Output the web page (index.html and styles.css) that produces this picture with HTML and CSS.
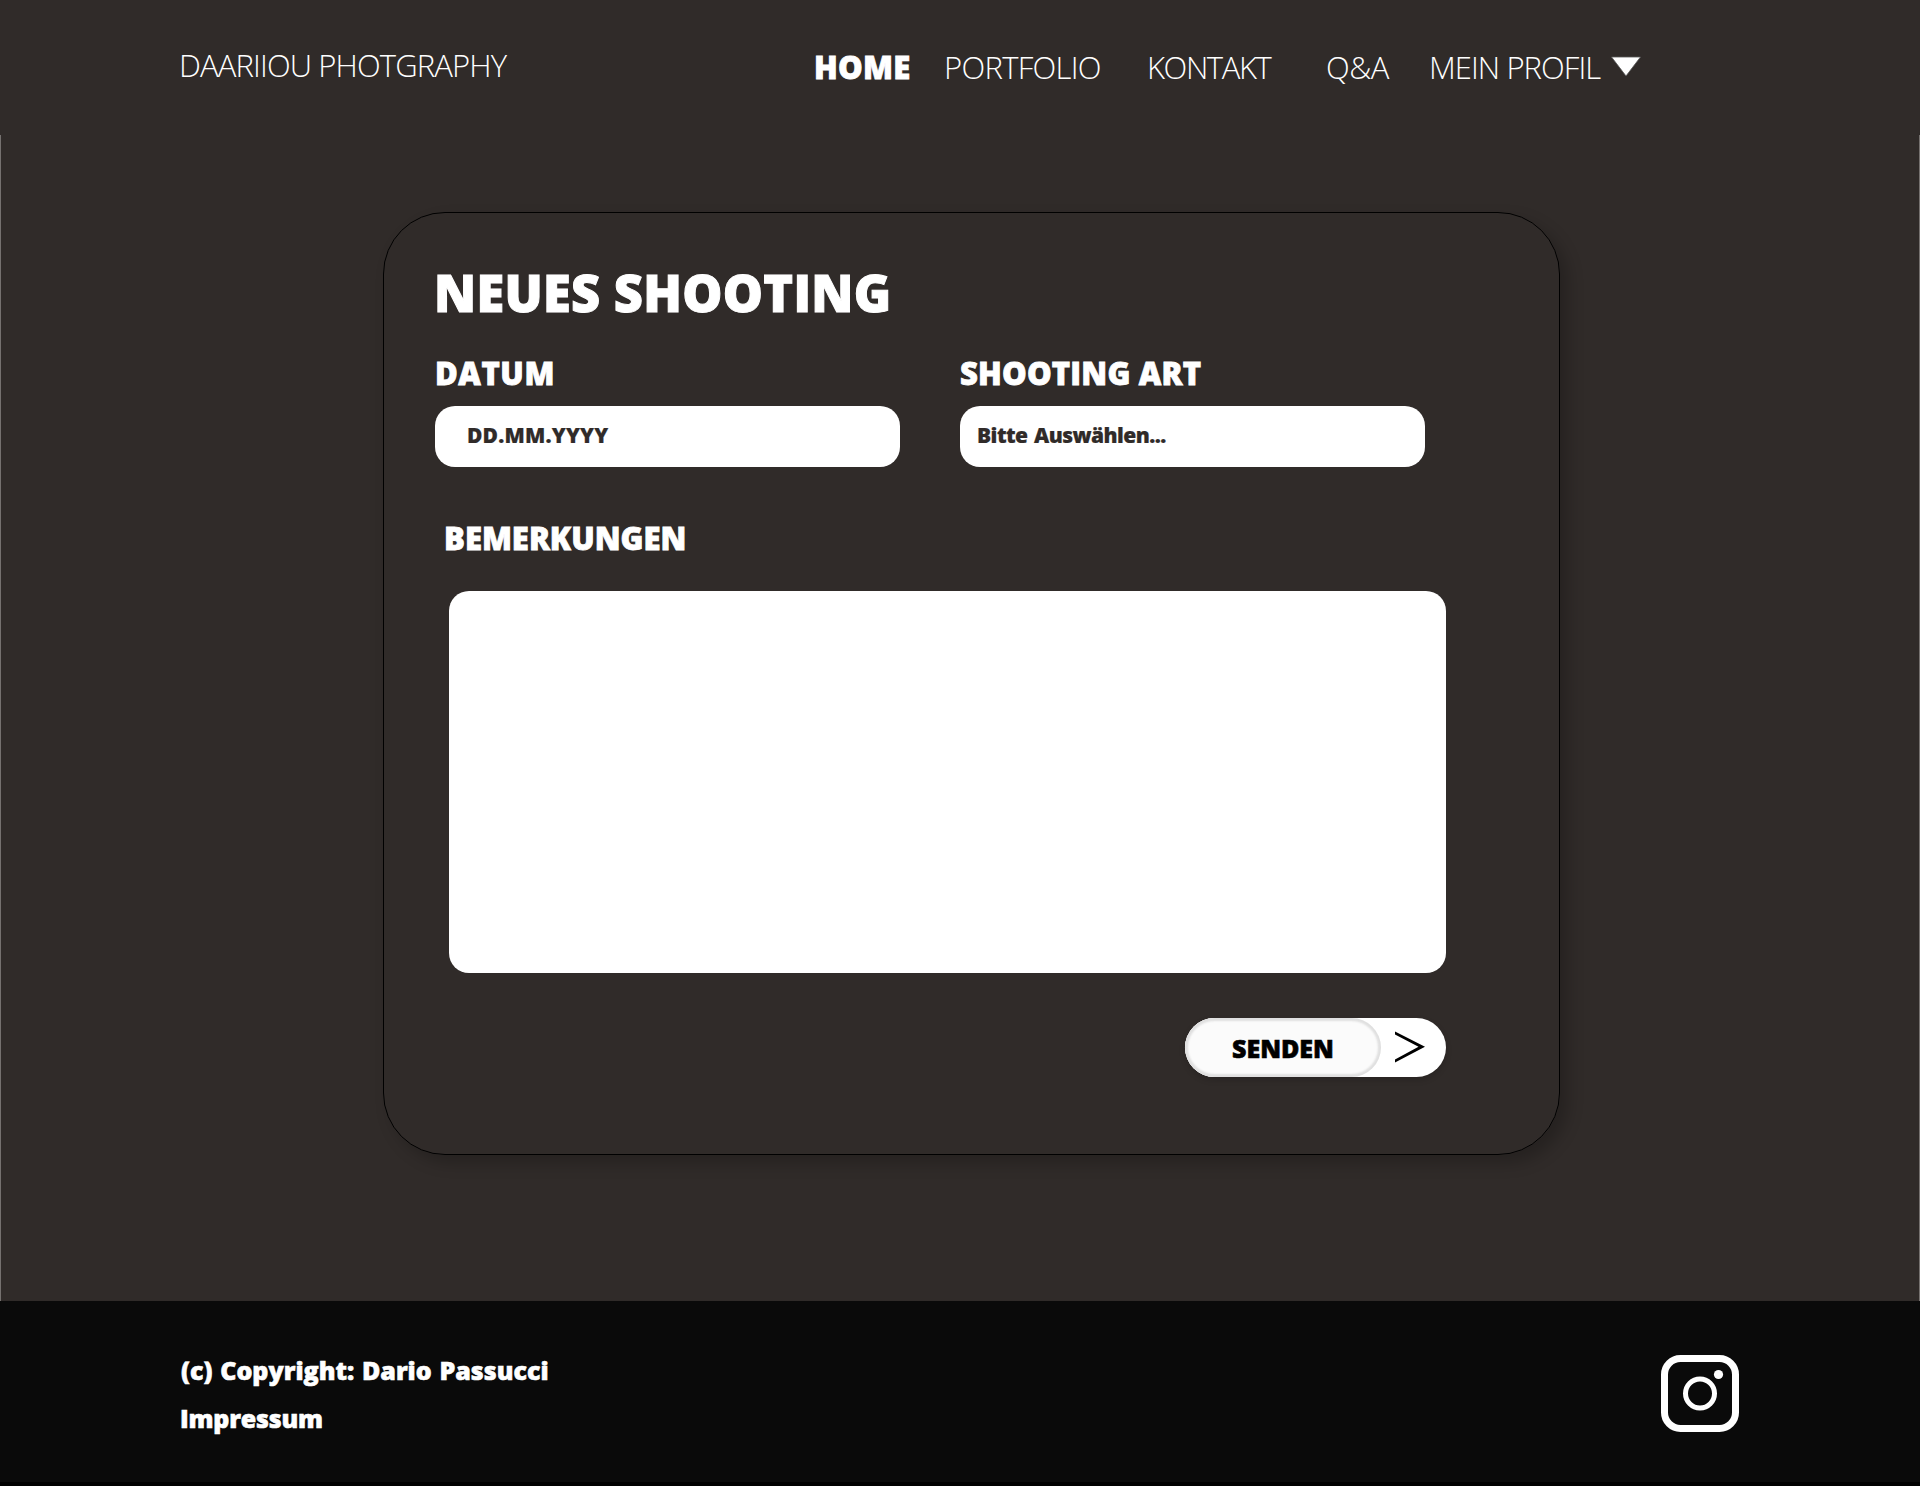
FILE: index.html
```html
<!DOCTYPE html>
<html lang="de">
<head>
<meta charset="utf-8">
<title>Neues Shooting</title>
<link rel="stylesheet" href="styles.css">
</head>
<body>
<header class="header">
  <div class="logo">DAARIIOU PHOTGRAPHY</div>
  <nav class="nav">
    <a class="nav-item active">HOME</a>
    <a class="nav-item portfolio">PORTFOLIO</a>
    <a class="nav-item kontakt">KONTAKT</a>
    <a class="nav-item">Q&amp;A</a>
    <a class="nav-item profil">MEIN PROFIL</a>
    <svg class="caret" width="30" height="21" viewBox="0 0 30 21"><path d="M.5 1H29.500L15 20Z" fill="#fff" stroke="#555" stroke-width=".8"/></svg>
  </nav>
</header>
<main class="main">
  <form class="card">
    <h1 class="title">NEUES SHOOTING</h1>
    <div class="fields">
      <div class="field">
        <label class="label datum">DATUM</label>
        <div class="input date">DD.MM.YYYY</div>
      </div>
      <div class="field">
        <label class="label art">SHOOTING ART</label>
        <div class="input select">Bitte Auswählen...</div>
      </div>
    </div>
    <div class="remarks">
      <label class="label">BEMERKUNGEN</label>
      <div class="textarea"></div>
      <div class="send">
        <span class="send-label">SENDEN</span>
        <svg class="chevron" width="32" height="34" viewBox="0 0 32 34"><path d="M1 1.500V4.500L24.500 16.700L1 29.500V32.500L31 16.700Z" fill="#000"/></svg>
      </div>
    </div>
  </form>
</main>
<footer class="footer">
  <div class="legal">
    <div class="copyright">(c) Copyright: Dario Passucci</div>
    <div class="impressum">Impressum</div>
  </div>
  <svg class="instagram" width="78" height="78" viewBox="0 0 78 78" fill="none" stroke="#fff">
    <rect x="3.500" y="3.500" width="71" height="70" rx="16" stroke-width="7"/>
    <circle cx="39" cy="38.500" r="14.500" stroke-width="5"/>
    <circle cx="57.500" cy="19.500" r="4.600" fill="#fff" stroke="none"/>
  </svg>
</footer>
</body>
</html>
```
FILE: styles.css
```css
* { box-sizing: border-box; }

body {
  margin: 0;
  background: #302b29;
  color: #fff;
  font-family: "Open Sans", "Noto Sans", sans-serif;
  font-weight: 800;
  -webkit-text-stroke: 0.6px currentColor;
}

.header {
  height: 135px;
  display: grid;
  grid-template-columns: 635px auto;
  padding: 49px 0 0 179px;
  font-size: 31px;
  line-height: 32px;
  font-weight: 300;
  white-space: nowrap;
  -webkit-text-stroke: 0;
}

.logo { letter-spacing: -0.88px; }

.nav {
  display: grid;
  grid-template-columns: 130px 203px 179px 103px 182px 30px;
  padding-top: 2px;
}

.nav-item { letter-spacing: -0.5px; }
.nav-item.active {
  font-weight: 800;
  letter-spacing: 0.3px;
  -webkit-text-stroke: 0.8px currentColor;
}
.nav-item.portfolio { letter-spacing: -0.7px; }
.nav-item.kontakt { letter-spacing: -1.4px; }
.nav-item.profil { letter-spacing: -0.94px; }

.caret { margin-top: 5px; }

.main {
  height: 1166px;
  padding: 77px 0 0 382px;
  border: solid #75716f;
  border-width: 0 1px;
}

.card {
  width: 1177px;
  height: 943px;
  padding: 54px 0 0 50px;
  border: 1px solid #000;
  border-radius: 62px;
  box-shadow: 8px 8px 16px rgba(0, 0, 0, 0.22);
}

.title {
  margin: 0 0 38px;
  font-size: 50.5px;
  line-height: 52px;
  font-weight: 800;
  letter-spacing: 0.3px;
  -webkit-text-stroke: 1px currentColor;
}

.fields {
  display: grid;
  grid-template-columns: 465px 465px;
  gap: 60px;
  padding-left: 1px;
}

.field { display: grid; gap: 17px; }

.label {
  display: block;
  font-size: 31px;
  line-height: 32px;
  -webkit-text-stroke: 0.8px currentColor;
}
.datum { letter-spacing: 0.6px; }
.art { letter-spacing: 0.2px; }

.input {
  height: 61px;
  border-radius: 20px;
  background: #fff;
  color: #302b29;
  font-size: 21px;
  line-height: 58px;
  -webkit-text-stroke: 0.2px currentColor;
}
.date { padding-left: 32px; letter-spacing: 0.2px; }
.select { padding-left: 17px; letter-spacing: -0.55px; word-spacing: 1.5px; }

.remarks {
  width: 1002px;
  margin: 55px 0 0 10px;
}

.textarea {
  height: 382px;
  margin: 37px 0 45px 5px;
  border-radius: 20px;
  background: #fff;
}

.send {
  width: 261px;
  height: 59px;
  margin-left: auto;
  display: flex;
  border-radius: 30px;
  background: #fff;
  color: #000;
  box-shadow: 0 3px 6px rgba(0, 0, 0, 0.16);
}

.send-label {
  width: 196px;
  padding-left: 47px;
  border-radius: 30px;
  background: #fbfbfb;
  box-shadow: inset 0 0 2px 3px #e0e0e0;
  font-size: 25px;
  line-height: 61px;
}

.chevron { margin: 12px 0 0 13px; }

.footer {
  height: 185px;
  display: flex;
  justify-content: space-between;
  padding: 54px 181px 0 181px;
  background: #0a0a0a;
  border-bottom: 4px solid #000;
}

.legal {
  font-size: 25px;
  line-height: 48px;
  margin-top: -9px;
}
.copyright { letter-spacing: 0; word-spacing: 1.3px; }
.impressum { margin-left: -1px; letter-spacing: -0.2px; }
```
